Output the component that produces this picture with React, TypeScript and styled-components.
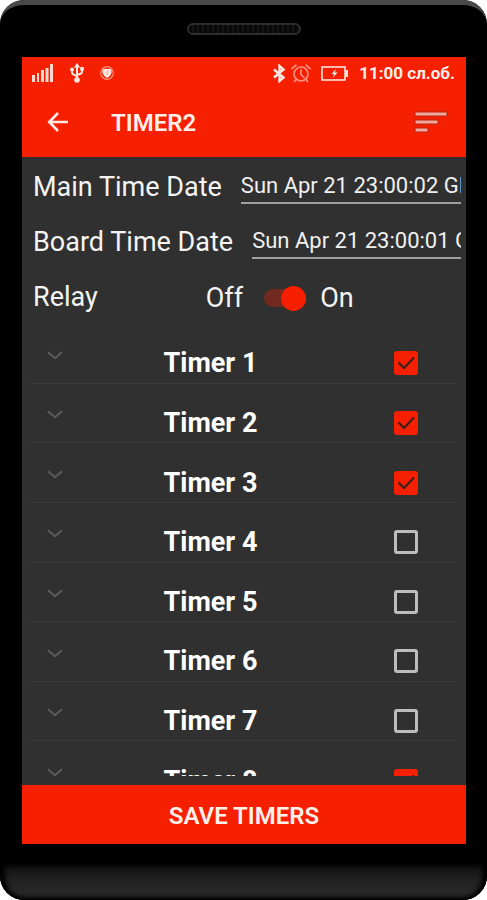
import React, { useState } from "react";
import styled, { createGlobalStyle } from "styled-components";

const RED = "#f62000";
const PANEL = "#303030";

const GlobalStyle = createGlobalStyle`
  *, *::before, *::after { box-sizing: border-box; }
  body {
    margin: 0;
    background: #ffffff;
    font-family: Roboto, "Noto Sans", sans-serif;
    color: #f4f4f4;
  }
  button, input { font-family: inherit; margin: 0; }
`;

const Phone = styled.div`
  display: flex;
  flex-direction: column;
  height: 100vh;
  min-height: 600px;
  overflow: hidden;
  background: #000000;
  border-radius: 24px;
`;

const TopBezel = styled.div`
  flex: 0 0 57px;
  display: flex;
  justify-content: center;
  align-items: flex-start;
  padding-top: 18px;
  border-top: 5px solid #4a4a4a;
  border-radius: 24px 24px 0 0;
  background: #000000;
`;

const Speaker = styled.div`
  width: 114px;
  height: 12px;
  border: 2px solid #2d2d2d;
  border-radius: 6px;
  background: repeating-linear-gradient(90deg, #080808 0 3px, #151515 3px 5px);
`;

const BottomBezel = styled.div`
  flex: 0 0 56px;
  display: flex;
  flex-direction: column;
  justify-content: flex-end;
`;

const Chin = styled.div`
  height: 36px;
  border-radius: 0 0 24px 24px;
  background: linear-gradient(#0d0d0d, #222222 45%, #272727 80%, #161616);
  box-shadow: inset 5px 0 5px #000000, inset -5px 0 5px #000000,
    inset 0 -1px 2px #000000;
`;

const Screen = styled.main`
  flex: 1 1 auto;
  min-height: 0;
  display: flex;
  flex-direction: column;
  margin: 0 21px 0 22px;
  background: ${PANEL};
`;

const Header = styled.header`
  flex: 0 0 auto;
  background: ${RED};
  color: #ffeeea;
`;

const StatusBar = styled.div`
  display: flex;
  align-items: center;
  justify-content: space-between;
  height: 32px;
  padding: 0 11px 0 10px;
`;

const StatusGroup = styled.div<{ $gap: number }>`
  display: flex;
  align-items: center;
  gap: ${(p) => p.$gap}px;
`;

const Clock = styled.span`
  margin-left: 6px;
  font-size: 17px;
  line-height: 20px;
  font-weight: 700;
`;

const AppBar = styled.div`
  display: flex;
  align-items: center;
  height: 68px;
  padding: 0 18px 2px 25px;
`;

const IconButton = styled.button`
  display: grid;
  place-items: center;
  padding: 0;
  border: 0;
  background: none;
  color: inherit;
  cursor: pointer;
`;

const Title = styled.h1`
  flex: 1;
  margin: 0 0 0 42px;
  padding-top: 2px;
  font-size: 24px;
  line-height: 28px;
  font-weight: 600;
`;

const Fields = styled.section`
  flex: 0 0 auto;
  display: flex;
  flex-direction: column;
  padding: 2px 5px 0 11px;
`;

const Field = styled.div`
  display: flex;
  align-items: center;
  height: 55px;
  gap: 19px;
`;

const FieldLabel = styled.label`
  flex: none;
  font-size: 27px;
  line-height: 32px;
  white-space: nowrap;
`;

const DateInput = styled.input`
  flex: 1;
  min-width: 0;
  height: 35px;
  padding: 0 0 1px;
  border: 0;
  border-bottom: 2px solid #a0a0a0;
  border-radius: 0;
  outline: none;
  background: none;
  color: #f0f0f0;
  font-size: 22px;
  line-height: 32px;
`;

const RelayControl = styled.label`
  display: flex;
  align-items: center;
  gap: 14px;
  margin-left: 89px;
  padding-top: 3px;
  font-size: 27px;
  line-height: 32px;
`;

const Switch = styled.input`
  appearance: none;
  display: flex;
  align-items: center;
  justify-content: flex-start;
  width: 42px;
  height: 18px;
  margin: 0;
  margin-left: 7px;
  border-radius: 9px;
  background: #5c5c5c;
  cursor: pointer;
  &::before {
    content: "";
    flex: none;
    width: 25px;
    height: 25px;
    border-radius: 50%;
    background: #b9b9b9;
  }
  &:checked {
    justify-content: flex-end;
    background: #702a20;
  }
  &:checked::before {
    background: ${RED};
  }
`;

const TimerViewport = styled.section`
  flex: 1 1 auto;
  min-height: 0;
  margin: 0 10px 9px 9px;
  overflow: hidden;
`;

const TimerList = styled.ul`
  display: grid;
  grid-auto-rows: 1fr;
  height: 477px;
  margin: 0;
  padding: 0;
  list-style: none;
`;

const TimerRow = styled.li`
  display: grid;
  grid-template-columns: 48px 1fr 114px;
  align-items: center;
  padding-top: 20px;
  border-bottom: 1px solid #3b3b3b;
`;

const Expand = styled(IconButton)`
  align-self: start;
  height: 22px;
  color: #5c5c5c;
`;

const TimerName = styled.label`
  justify-self: center;
  font-size: 27px;
  line-height: 32px;
  font-weight: 700;
  color: #ffffff;
`;

const TickBox = styled.span`
  display: grid;
  justify-self: end;
  width: 24px;
  height: 24px;
  margin-right: 38px;
  & > * {
    grid-area: 1 / 1;
  }
  svg {
    pointer-events: none;
  }
`;

const Tick = styled.input`
  appearance: none;
  width: 24px;
  height: 24px;
  border: 3px solid #bdbdbd;
  border-radius: 3px;
  cursor: pointer;
  &:checked {
    border-color: ${RED};
    background: ${RED};
  }
`;

const SaveButton = styled.button`
  flex: 0 0 59px;
  padding: 2px 0 0;
  border: 0;
  background: ${RED};
  color: #fff0ec;
  font-size: 24px;
  line-height: 28px;
  font-weight: 600;
  cursor: pointer;
`;

const SignalIcon = () => (
  <svg width="22" height="18" viewBox="0 0 22 18" fill="#ffd9d0" aria-hidden="true">
    <rect x="0" y="11" width="3" height="7" />
    <rect x="5" y="9" width="2" height="9" />
    <rect x="9" y="6" width="3" height="12" />
    <rect x="13.5" y="4" width="3" height="14" />
    <rect x="18" y="0" width="3" height="18" />
  </svg>
);

const UsbIcon = () => (
  <svg width="14" height="20" viewBox="0 0 14 20" aria-hidden="true">
    <g fill="none" stroke="#ffe7e2" strokeWidth="2">
      <path d="M7 3v13" />
      <path d="M2 7v2.500q0 1.500 1.500 2L7 13.500" />
      <path d="M12 6v3q0 1-1 1.500L7 12" />
    </g>
    <g fill="#ffe7e2">
      <path d="M7 0l3.200 4.500H3.800z" />
      <circle cx="2" cy="6.500" r="1.900" />
      <rect x="10.200" y="4" width="3.600" height="3.600" />
      <circle cx="7" cy="17" r="2.800" />
    </g>
  </svg>
);

const ShieldIcon = () => (
  <svg width="14" height="16" viewBox="0 0 14 16" aria-hidden="true">
    <circle cx="7" cy="8" r="6.300" fill="none" stroke="#ff8f7c" strokeWidth="1.200" />
    <path d="M7 4q2.500-.8 4.500.5v3q-.5 3-4.500 5.500Q3 10.500 2.500 7.500v-3Q4.500 3.200 7 4z" fill="#ffe7e2" />
    <path d="M8.500 5.500L6.500 7.500l1 .8L7 10" fill="none" stroke="#fa9a86" strokeWidth="1" />
  </svg>
);

const BluetoothIcon = () => (
  <svg width="13" height="19" viewBox="0 0 13 19" fill="none" stroke="#ffe9e5" strokeWidth="2.400" aria-hidden="true">
    <path d="M1 5.500l9.500 8L6.500 17V2l4 3.500L1 13.500" />
  </svg>
);

const AlarmIcon = () => (
  <svg width="20" height="19" viewBox="0 0 20 19" fill="none" stroke="#ff9080" strokeWidth="1.700" strokeLinecap="round" aria-hidden="true">
    <circle cx="10" cy="10" r="7" />
    <path d="M1 4.500L5 1.200M19 4.500L15 1.200M10 6v4.500l3 3M5 15.500l-1.500 2M15 15.500l1.500 2" />
  </svg>
);

const BatteryIcon = () => (
  <svg width="27" height="15" viewBox="0 0 27 15" aria-hidden="true">
    <rect x="1" y="1" width="23" height="13" fill="none" stroke="#ffe3dd" strokeWidth="1.600" />
    <rect x="24.500" y="4" width="2.500" height="7" fill="#ffe3dd" />
    <path d="M15 3l-4.500 5h2.700L11.500 12l5-5.500h-2.700z" fill="#ffe9e5" />
  </svg>
);

const BackIcon = () => (
  <svg width="22" height="20" viewBox="0 0 22 20" fill="none" stroke="#ffe9e5" strokeWidth="2.600" aria-hidden="true">
    <path d="M21 10H2.500M11 1L2.200 10l8.800 9" />
  </svg>
);

const SortIcon = () => (
  <svg width="34" height="24" viewBox="0 0 34 24" aria-hidden="true">
    <g fill="#f9a69a" stroke="#a82a18" strokeWidth="1">
      <rect x="1" y="2" width="32" height="4" rx="1" />
      <rect x="1" y="10" width="23" height="4" rx="1" />
      <rect x="1" y="18" width="13" height="4" rx="1" />
    </g>
  </svg>
);

const ChevronIcon = () => (
  <svg width="16" height="9" viewBox="0 0 16 9" fill="none" stroke="currentColor" strokeWidth="2" aria-hidden="true">
    <path d="M1 1.200l7 6 7-6" />
  </svg>
);

const TickIcon = () => (
  <svg width="24" height="24" viewBox="0 0 24 24" fill="none" stroke="#3a211d" strokeWidth="2.200" aria-hidden="true">
    <path d="M4.500 11.500l5.500 5.500L20 6.500" />
  </svg>
);

const dates = [
  { id: "main-time", label: "Main Time Date", value: "Sun Apr 21 23:00:02 GMT+03:00 2019" },
  { id: "board-time", label: "Board Time Date", value: "Sun Apr 21 23:00:01 GMT+03:00 2019" },
];

export default function App() {
  const [relay, setRelay] = useState(true);
  const [enabled, setEnabled] = useState([true, true, true, false, false, false, false, true]);
  const toggle = (index: number) =>
    setEnabled((list) => list.map((on, i) => (i === index ? !on : on)));

  return (
    <>
      <GlobalStyle />
      <Phone>
        <TopBezel>
          <Speaker />
        </TopBezel>
        <Screen>
          <Header>
            <StatusBar>
              <StatusGroup $gap={16}>
                <SignalIcon />
                <UsbIcon />
                <ShieldIcon />
              </StatusGroup>
              <StatusGroup $gap={5}>
                <BluetoothIcon />
                <AlarmIcon />
                <span />
                <BatteryIcon />
                <Clock>11:00 сл.об.</Clock>
              </StatusGroup>
            </StatusBar>
            <AppBar>
              <IconButton type="button" aria-label="Back">
                <BackIcon />
              </IconButton>
              <Title>TIMER2</Title>
              <IconButton type="button" aria-label="Sort">
                <SortIcon />
              </IconButton>
            </AppBar>
          </Header>
          <Fields>
            {dates.map((d) => (
              <Field key={d.id}>
                <FieldLabel htmlFor={d.id}>{d.label}</FieldLabel>
                <DateInput id={d.id} type="text" defaultValue={d.value} />
              </Field>
            ))}
            <Field>
              <FieldLabel htmlFor="relay">Relay</FieldLabel>
              <RelayControl>
                Off
                <Switch
                  id="relay"
                  type="checkbox"
                  role="switch"
                  checked={relay}
                  onChange={() => setRelay(!relay)}
                />
                On
              </RelayControl>
            </Field>
          </Fields>
          <TimerViewport>
            <TimerList>
              {enabled.map((on, i) => (
                <TimerRow key={i}>
                  <Expand type="button" aria-label={`Expand timer ${i + 1}`}>
                    <ChevronIcon />
                  </Expand>
                  <TimerName htmlFor={`timer-${i}`}>Timer {i + 1}</TimerName>
                  <TickBox>
                    <Tick
                      id={`timer-${i}`}
                      type="checkbox"
                      checked={on}
                      onChange={() => toggle(i)}
                    />
                    {on && <TickIcon />}
                  </TickBox>
                </TimerRow>
              ))}
            </TimerList>
          </TimerViewport>
          <SaveButton type="button">SAVE TIMERS</SaveButton>
        </Screen>
        <BottomBezel>
          <Chin />
        </BottomBezel>
      </Phone>
    </>
  );
}
